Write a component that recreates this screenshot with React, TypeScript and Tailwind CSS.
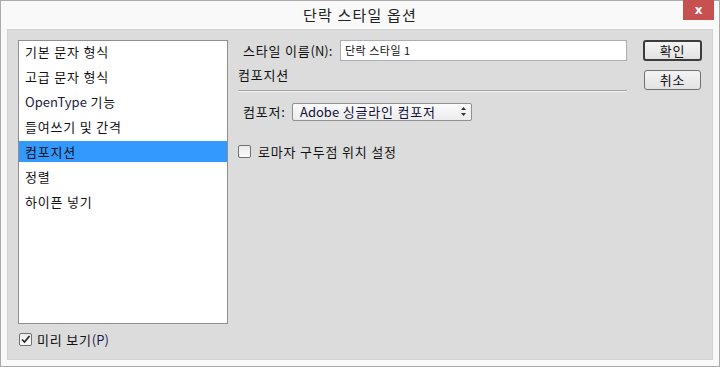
import React from 'react';

const FONT = { fontFamily: '"Noto Sans CJK KR", "Noto Sans", sans-serif' };

const items = ['기본 문자 형식', '고급 문자 형식', 'OpenType 기능', '들여쓰기 및 간격', '컴포지션', '정렬', '하이픈 넣기'];

const CheckBox = ({ checked }: { checked?: boolean }) => (
  <span className="flex h-[13px] w-[13px] shrink-0 items-center justify-center rounded-[2px] border border-[#707070] bg-gradient-to-b from-[#ececec] to-[#fafafa]">
    {checked && (
      <svg viewBox="0 0 11 11" className="h-[11px] w-[11px]">
        <path d="M2 5.5 L4.5 8 L9.5 2" fill="none" stroke="#222" strokeWidth="1.6" />
      </svg>
    )}
  </span>
);

const App: React.FC = () => {
  return (
    <div className="flex h-[367px] w-[720px] flex-col border border-[#ababab] bg-[#f9f9f9] text-[13px] tracking-[0.8px] text-[#111]" style={FONT}>
      {/* title bar */}
      <div className="relative flex h-[28px] shrink-0 items-center justify-center">
        <span className="text-[15px] tracking-[1.2px] text-[#222]">단락 스타일 옵션</span>
        <div className="absolute right-[5px] top-[-1px] flex h-[20px] w-[31px] items-center justify-center bg-[#c75050] text-[12px] font-bold tracking-normal text-white" style={{ fontFamily: '"DejaVu Sans", sans-serif' }}>
          x
        </div>
      </div>

      <div className="mx-[6px] mb-[6px] flex flex-1 border border-[#d3d3d3] bg-[#dcdcdc] pl-[10px] pt-[10px]">
        {/* left column */}
        <div className="flex flex-col">
          <div className="flex h-[284px] w-[210px] flex-col gap-[4px] border border-[#8e8f8f] bg-white">
            {items.map((t, i) => (
              <div key={t} className={`flex h-[21px] items-center pl-[6px] ${i === 4 ? 'bg-[#3399ff]' : ''}`}>
                {i === 2 ? (
                  <span><span className="tracking-normal text-[#1a1a40]">OpenType</span> 기능</span>
                ) : (
                  <span>{t}</span>
                )}
              </div>
            ))}
          </div>
          <div className="mt-[6px] flex items-center gap-[5px] pl-[1px]">
            <CheckBox checked />
            <span>미리 보기<span className="tracking-normal text-[#1a1a50]">(P)</span></span>
          </div>
        </div>

        {/* right column */}
        <div className="ml-[10px] flex w-[389px] flex-col">
          <div className="flex h-[21px] items-center pt-0">
            <span className="ml-[5px] w-[97px]">스타일 이름<span className="tracking-normal">(N):</span></span>
            <div className="flex h-[21px] flex-1 items-center border border-[#abadb3] bg-white pl-[4px] text-[11px] tracking-[0.5px]">단락 스타일 1</div>
          </div>
          <div className="mt-[4px] h-[19px] leading-[19px]">컴포지션</div>
          <div className="mt-[6px] h-[2px] border-t border-[#a0a0a0] bg-[#f2f2f2]" />
          <div className="mt-[10px] flex items-center">
            <span className="ml-[5px] w-[49px]">컴포저:</span>
            <div className="flex h-[18px] w-[180px] items-center justify-between rounded-[2px] border border-[#8e8f8f] bg-gradient-to-b from-[#fbfbfb] to-[#ececec] pl-[7px] pr-[4px]">
              <span className="text-[#10103a]"><span className="tracking-normal">Adobe</span> 싱글라인 컴포저</span>
              <svg viewBox="0 0 7 11" className="h-[11px] w-[7px]">
                <path d="M3.5 1 L6 4 H1 Z M3.5 10 L6 7 H1 Z" fill="#333" />
              </svg>
            </div>
          </div>
          <div className="mt-[20px] flex items-center gap-[7px]">
            <CheckBox />
            <span>로마자 구두점 위치 설정</span>
          </div>
        </div>

        {/* buttons */}
        <div className="ml-[16px] flex flex-col items-start">
          <button className="flex h-[21px] w-[59px] items-center justify-center rounded-[3px] border-2 border-[#3c3c3c] bg-gradient-to-b from-[#f4f4f4] to-[#e2e2e2]">
            확인
          </button>
          <button className="ml-[1px] mt-[9px] flex h-[20px] w-[57px] items-center justify-center rounded-[3px] border border-[#707070] bg-gradient-to-b from-[#f4f4f4] to-[#e2e2e2]">
            취소
          </button>
        </div>
      </div>
    </div>
  );
};

export default App;
